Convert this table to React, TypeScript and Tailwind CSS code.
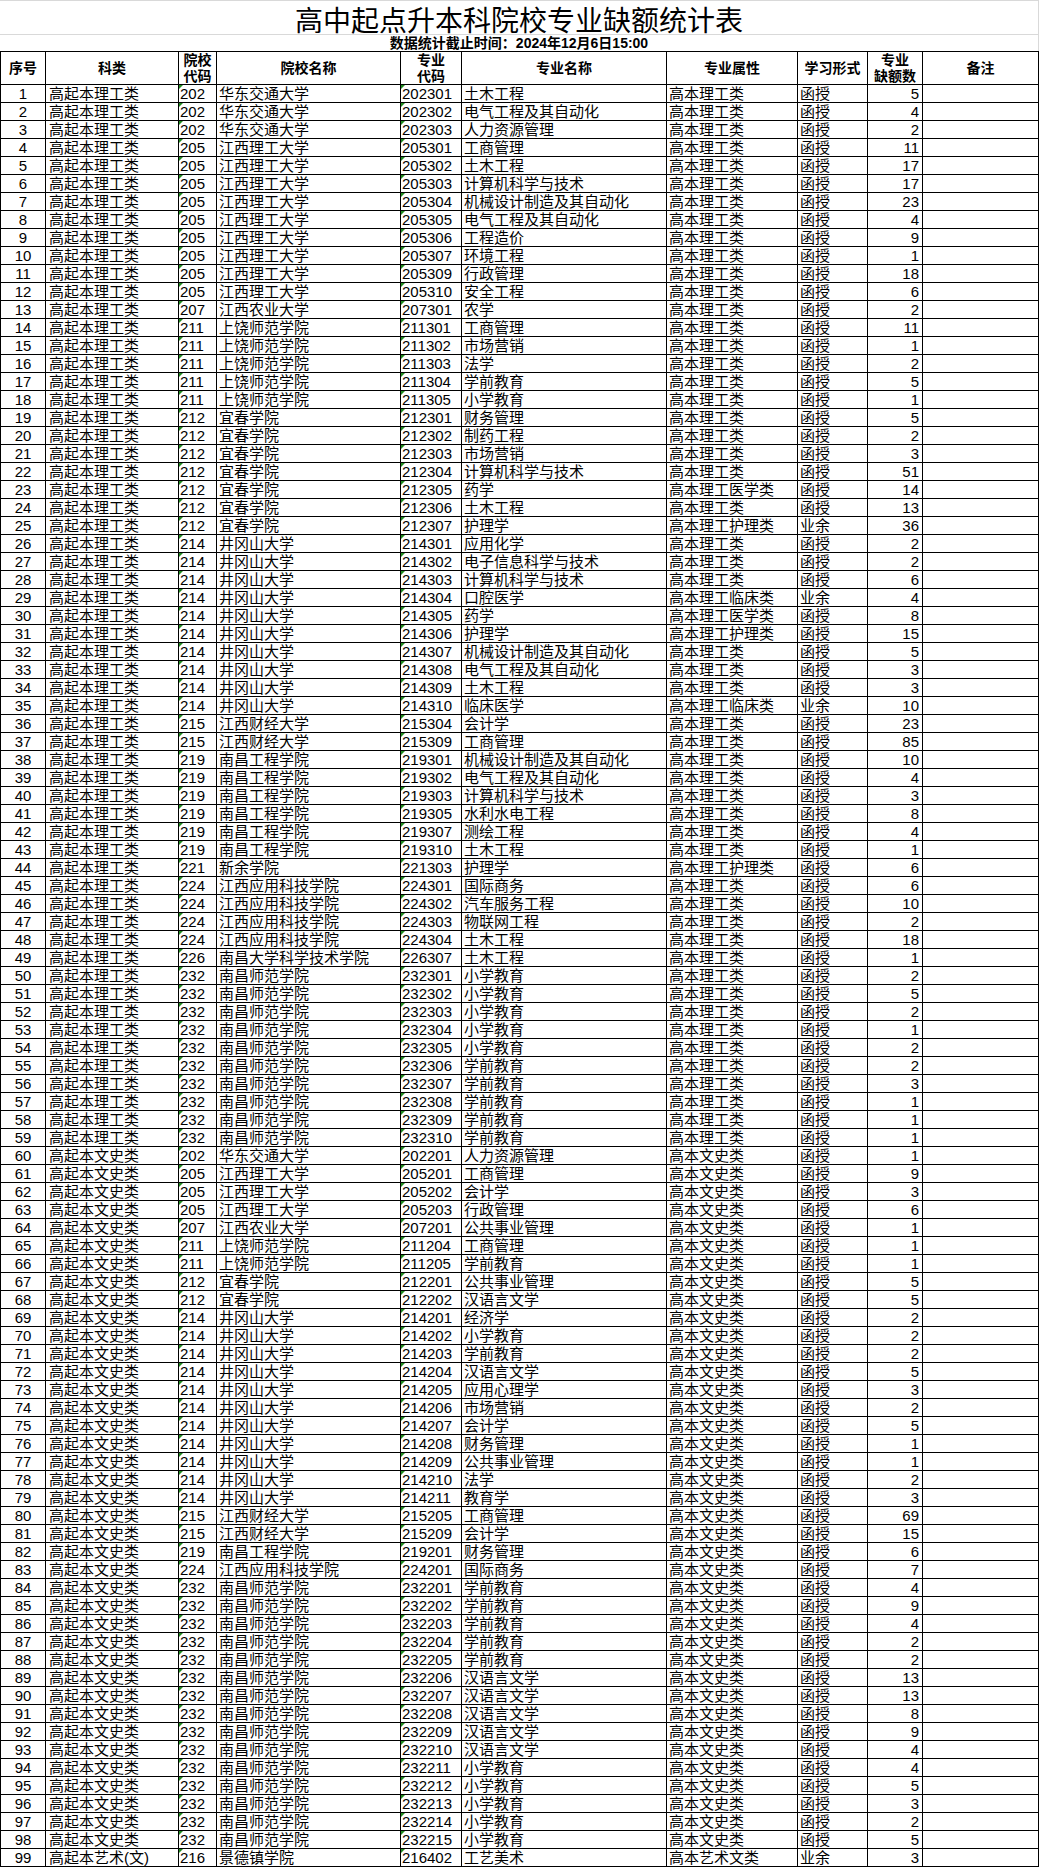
import { Fragment } from "react"

const schools: Record<string, string> = {
  "202": "华东交通大学",
  "205": "江西理工大学",
  "207": "江西农业大学",
  "211": "上饶师范学院",
  "212": "宜春学院",
  "214": "井冈山大学",
  "215": "江西财经大学",
  "216": "景德镇学院",
  "219": "南昌工程学院",
  "221": "新余学院",
  "224": "江西应用科技学院",
  "226": "南昌大学科学技术学院",
  "232": "南昌师范学院",
}

// [专业代码, 专业名称, 缺额数, 专业属性?, 学习形式?]
type Row = [string, string, number, string?, string?]

const rows: Row[] = [
  ["202301", "土木工程", 5],
  ["202302", "电气工程及其自动化", 4],
  ["202303", "人力资源管理", 2],
  ["205301", "工商管理", 11],
  ["205302", "土木工程", 17],
  ["205303", "计算机科学与技术", 17],
  ["205304", "机械设计制造及其自动化", 23],
  ["205305", "电气工程及其自动化", 4],
  ["205306", "工程造价", 9],
  ["205307", "环境工程", 1],
  ["205309", "行政管理", 18],
  ["205310", "安全工程", 6],
  ["207301", "农学", 2],
  ["211301", "工商管理", 11],
  ["211302", "市场营销", 1],
  ["211303", "法学", 2],
  ["211304", "学前教育", 5],
  ["211305", "小学教育", 1],
  ["212301", "财务管理", 5],
  ["212302", "制药工程", 2],
  ["212303", "市场营销", 3],
  ["212304", "计算机科学与技术", 51],
  ["212305", "药学", 14, "高本理工医学类"],
  ["212306", "土木工程", 13],
  ["212307", "护理学", 36, "高本理工护理类", "业余"],
  ["214301", "应用化学", 2],
  ["214302", "电子信息科学与技术", 2],
  ["214303", "计算机科学与技术", 6],
  ["214304", "口腔医学", 4, "高本理工临床类", "业余"],
  ["214305", "药学", 8, "高本理工医学类"],
  ["214306", "护理学", 15, "高本理工护理类"],
  ["214307", "机械设计制造及其自动化", 5],
  ["214308", "电气工程及其自动化", 3],
  ["214309", "土木工程", 3],
  ["214310", "临床医学", 10, "高本理工临床类", "业余"],
  ["215304", "会计学", 23],
  ["215309", "工商管理", 85],
  ["219301", "机械设计制造及其自动化", 10],
  ["219302", "电气工程及其自动化", 4],
  ["219303", "计算机科学与技术", 3],
  ["219305", "水利水电工程", 8],
  ["219307", "测绘工程", 4],
  ["219310", "土木工程", 1],
  ["221303", "护理学", 6, "高本理工护理类"],
  ["224301", "国际商务", 6],
  ["224302", "汽车服务工程", 10],
  ["224303", "物联网工程", 2],
  ["224304", "土木工程", 18],
  ["226307", "土木工程", 1],
  ["232301", "小学教育", 2],
  ["232302", "小学教育", 5],
  ["232303", "小学教育", 2],
  ["232304", "小学教育", 1],
  ["232305", "小学教育", 2],
  ["232306", "学前教育", 2],
  ["232307", "学前教育", 3],
  ["232308", "学前教育", 1],
  ["232309", "学前教育", 1],
  ["232310", "学前教育", 1],
  ["202201", "人力资源管理", 1],
  ["205201", "工商管理", 9],
  ["205202", "会计学", 3],
  ["205203", "行政管理", 6],
  ["207201", "公共事业管理", 1],
  ["211204", "工商管理", 1],
  ["211205", "学前教育", 1],
  ["212201", "公共事业管理", 5],
  ["212202", "汉语言文学", 5],
  ["214201", "经济学", 2],
  ["214202", "小学教育", 2],
  ["214203", "学前教育", 2],
  ["214204", "汉语言文学", 5],
  ["214205", "应用心理学", 3],
  ["214206", "市场营销", 2],
  ["214207", "会计学", 5],
  ["214208", "财务管理", 1],
  ["214209", "公共事业管理", 1],
  ["214210", "法学", 2],
  ["214211", "教育学", 3],
  ["215205", "工商管理", 69],
  ["215209", "会计学", 15],
  ["219201", "财务管理", 6],
  ["224201", "国际商务", 7],
  ["232201", "学前教育", 4],
  ["232202", "学前教育", 9],
  ["232203", "学前教育", 4],
  ["232204", "学前教育", 2],
  ["232205", "学前教育", 2],
  ["232206", "汉语言文学", 13],
  ["232207", "汉语言文学", 13],
  ["232208", "汉语言文学", 8],
  ["232209", "汉语言文学", 9],
  ["232210", "汉语言文学", 4],
  ["232211", "小学教育", 4],
  ["232212", "小学教育", 5],
  ["232213", "小学教育", 3],
  ["232214", "小学教育", 2],
  ["232215", "小学教育", 5],
  ["216402", "工艺美术", 3, "高本艺术文类", "业余"],
]

const kinds: Record<string, [string, string]> = {
  "3": ["高起本理工类", "高本理工类"],
  "2": ["高起本文史类", "高本文史类"],
  "4": ["高起本艺术(文)", "高本艺术文类"],
}

const cell = "h-[18px] border-r border-b border-black leading-[17px] whitespace-nowrap overflow-hidden"
const head = "h-[33px] border-r border-b border-black flex items-center justify-center text-center text-[14px] font-bold leading-[16px]"

function Tick() {
  return <span className="absolute left-0 top-0 border-t-[4px] border-r-[4px] border-t-[#1f8a1f] border-r-transparent" />
}

export default function App() {
  return (
    <div className="w-[1039px] bg-white text-black font-['Liberation_Sans','Noto_Sans_CJK_SC',sans-serif]">
      <div className="h-[35px] border-t border-b border-r border-[#d9d9d9] flex items-center justify-center pt-[3px] text-[28px] leading-[28px] font-['Noto_Sans_CJK_SC',sans-serif]">
        高中起点升本科院校专业缺额统计表
      </div>
      <div className="h-[16px] border-r border-[#d9d9d9] text-center text-[14px] font-bold leading-[16px]">
        数据统计截止时间：2024年12月6日15:00
      </div>

      <div className="grid grid-cols-[45px_133px_38px_184px_61px_205px_131px_70px_55px_116px] border-l border-t border-black text-[15px]">
        <div className={head}>序号</div>
        <div className={head}>科类</div>
        <div className={head}>院校<br />代码</div>
        <div className={head}>院校名称</div>
        <div className={head}>专业<br />代码</div>
        <div className={head}>专业名称</div>
        <div className={head}>专业属性</div>
        <div className={head}>学习形式</div>
        <div className={head}>专业<br />缺额数</div>
        <div className={head}>备注</div>

        {rows.map((r, i) => {
          const [code, major, n, attr, form] = r
          const school = code.slice(0, 3)
          const [kind, defAttr] = kinds[code[3]]
          return (
            <Fragment key={code}>
              <div className={`${cell} text-center`}>{i + 1}</div>
              <div className={`${cell} pl-[3px]`}>{kind}</div>
              <div className={`${cell} relative pl-[1px]`}>
                <Tick />
                {school}
              </div>
              <div className={`${cell} pl-[2px]`}>{schools[school]}</div>
              <div className={`${cell} relative pl-[1px]`}>
                <Tick />
                {code}
              </div>
              <div className={`${cell} pl-[2px]`}>{major}</div>
              <div className={`${cell} pl-[2px]`}>{attr ?? defAttr}</div>
              <div className={`${cell} pl-[2px]`}>{form ?? "函授"}</div>
              <div className={`${cell} text-right pr-[3px]`}>{n}</div>
              <div className={cell}></div>
            </Fragment>
          )
        })}
      </div>
    </div>
  )
}
